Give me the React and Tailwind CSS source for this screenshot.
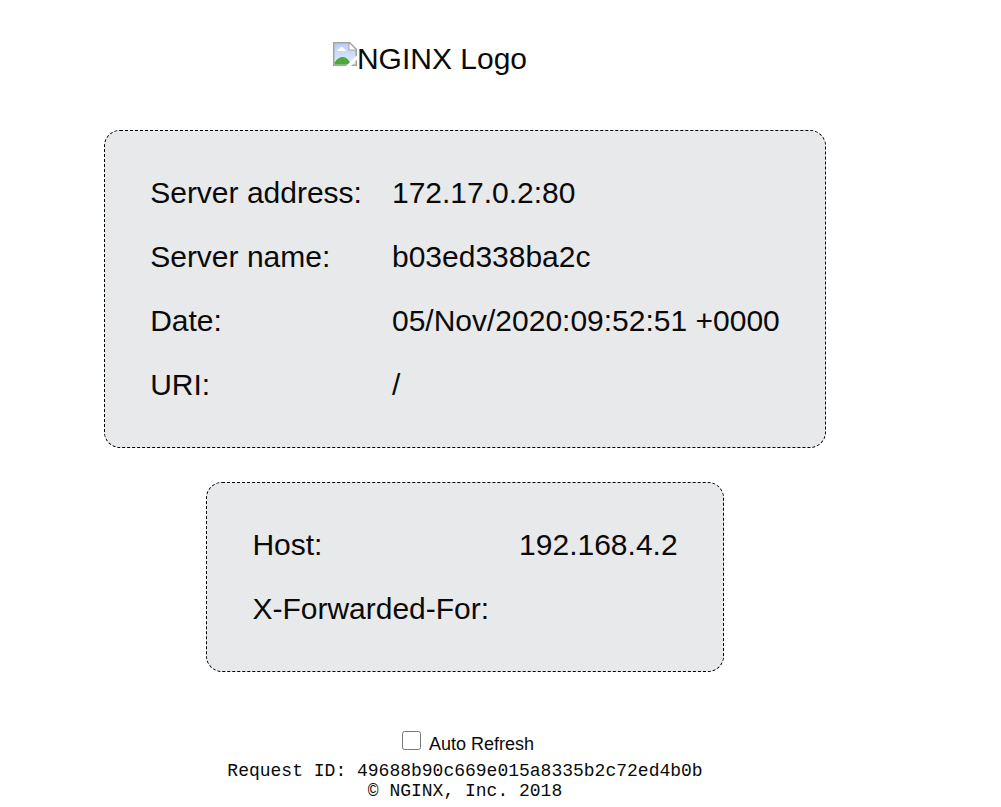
const server = [
  ["Server address:", "172.17.0.2:80"],
  ["Server name:", "b03ed338ba2c"],
  ["Date:", "05/Nov/2020:09:52:51 +0000"],
  ["URI:", "/"],
];

const request = [
  ["Host:", "192.168.4.2"],
  ["X-Forwarded-For:", ""],
];

function InfoTable({ rows }) {
  return (
    <table className="border-separate border-spacing-0 rounded-2xl border border-dashed border-black bg-[#e8e9eb] p-[30px] text-left">
      <tbody>
        {rows.map(([label, value]) => (
          <tr key={label} className="h-16">
            <th scope="row" className="px-[15px] py-0 font-normal">{label}</th>
            <td className="px-[15px] py-0">{value}</td>
          </tr>
        ))}
      </tbody>
    </table>
  );
}

function BrokenImage() {
  return (
    <svg width="24" height="24" viewBox="0 0 24 24" aria-hidden="true">
      <defs>
        <linearGradient id="sky" x1="0" y1="0" x2="0" y2="1">
          <stop offset="0" stopColor="#b9cdf5" />
          <stop offset="1" stopColor="#e3ecfc" />
        </linearGradient>
      </defs>
      <path d="M0 0h17l7 7v17H0z" fill="#a3a3a3" />
      <path d="M1.5 1.5h14v7h7v14h-21z" fill="url(#sky)" />
      <path d="M16.500 1.500l6 6h-6z" fill="#fff" />
      <path d="M4 9q0-2 2-2 1-2.500 3-2 2 0 2 2 2 0 2 2z" fill="#fff" />
      <path d="M1.500 22.500v-2Q5 15 10 15q5 0 8 7.500z" fill="#4fa83d" />
      <path d="M13 24L24 13.500v4L18 24z" fill="#fff" />
    </svg>
  );
}

export default function App() {
  return (
    <main className="flex min-h-screen flex-col items-center bg-white pt-[37px] pr-[71px] font-['Liberation_Sans',Arial,sans-serif] text-[30px] leading-[44px] text-[#0a0a0a]">
      <h1 className="mr-[70px] flex items-start font-normal">
        <span className="flex pt-[5px]"><BrokenImage /></span>
        NGINX Logo
      </h1>
      <div className="mt-[49px] flex flex-col items-center gap-[34px]">
        <InfoTable rows={server} />
        <InfoTable rows={request} />
      </div>
      <footer className="mt-[59px] text-center">
        <label className="flex items-baseline justify-center gap-2 pl-[6px] text-lg leading-6">
          <input type="checkbox" className="size-[19px]" />
          Auto Refresh
        </label>
        <p className="mt-[5px] font-['Liberation_Mono','Courier_New',monospace] text-lg leading-5">
          Request ID: 49688b90c669e015a8335b2c72ed4b0b
          <br />© NGINX, Inc. 2018
        </p>
      </footer>
    </main>
  );
}
